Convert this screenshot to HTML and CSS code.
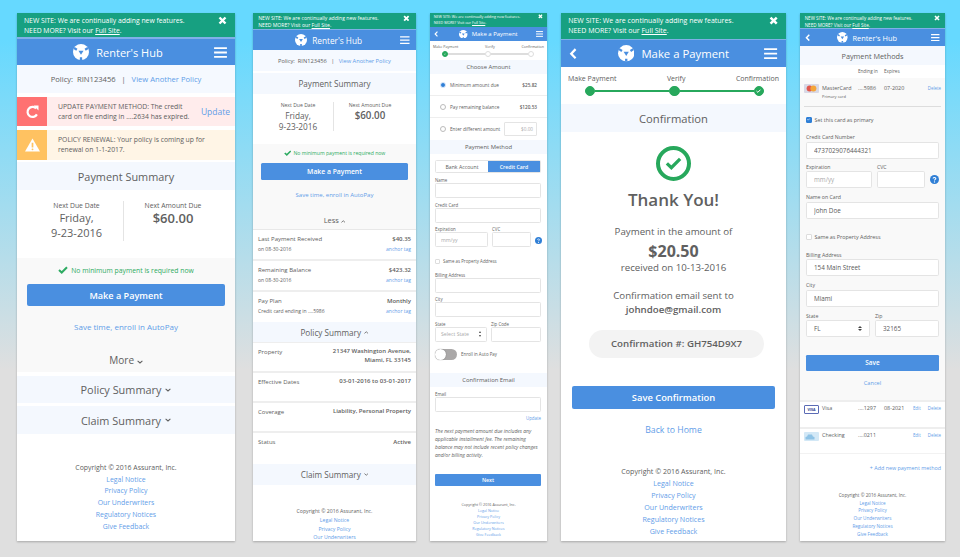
FILE: index.html
```html
<!DOCTYPE html>
<html lang="en">
  <head>
    <meta charset="UTF-8" />
    <title>Renter's Hub</title>
    <link rel="stylesheet" href="styles.css">
  </head>

  <body>
    <svg class="sprites" width="0" height="0">
      <symbol id="i-logo" viewBox="0 0 24 24">
        <circle cx="12" cy="12" r="12" fill="#fff" />
        <path d="M8.2 10h7.6L12 16z" fill="#4a8fe0" />
        <path d="M12 24v-4M1.6 6l4.2 2.6M22.4 6l-4.2 2.6" stroke="#4a8fe0" stroke-width="3.4" fill="none" />
      </symbol>
      <symbol id="i-close" viewBox="0 0 12 12">
        <path d="M2 2l8 8M10 2l-8 8" stroke="#fff" stroke-width="3.2" fill="none" />
      </symbol>
      <symbol id="i-menu" viewBox="0 0 14 12">
        <path d="M0 1.2h14M0 6h14M0 10.8h14" stroke="#fff" stroke-width="2" fill="none" />
      </symbol>
      <symbol id="i-back" viewBox="0 0 8 12">
        <path d="M6.6 1.2L2 6l4.6 4.8" stroke="#fff" stroke-width="2.4" fill="none" />
      </symbol>
      <symbol id="i-down" viewBox="0 0 10 6">
        <path d="M1 1l4 3.6L9 1" stroke="currentColor" stroke-width="1.8" fill="none" />
      </symbol>
      <symbol id="i-up" viewBox="0 0 10 6">
        <path d="M1 5l4-3.6L9 5" stroke="currentColor" stroke-width="1.8" fill="none" />
      </symbol>
      <symbol id="i-check" viewBox="0 0 14 11">
        <path d="M1.4 5.4l3.8 3.6L12.6 1.6" stroke="currentColor" stroke-width="2.8" fill="none" />
      </symbol>
      <symbol id="i-help" viewBox="0 0 12 12">
        <circle cx="6" cy="6" r="6" fill="#2f7fd6" />
        <path d="M4.2 4.6C4.2 3 7.8 3 7.8 4.7 7.8 5.9 6 5.8 6 7.2" stroke="#fff" stroke-width="1.4" fill="none" />
        <circle cx="6" cy="9.2" r=".9" fill="#fff" />
      </symbol>
    </svg>

    <!-- home, collapsed -->
    <div class="screen s1">
      <div class="banner">
        <p>NEW SITE: We are continually adding new features.<br />NEED MORE? Visit our <a>Full Site</a>.</p>
        <svg class="close"><use href="#i-close" /></svg>
      </div>
      <div class="header">
        <span></span>
        <div class="brand"><svg class="logo"><use href="#i-logo" /></svg><span>Renter's Hub</span></div>
        <svg class="menu"><use href="#i-menu" /></svg>
      </div>
      <div class="policy">Policy: &nbsp;RIN123456 &nbsp;&nbsp;|&nbsp;&nbsp; <a>View Another Policy</a></div>
      <div class="alert alert-red">
        <div class="alert-icon">
          <svg viewBox="0 0 14 14"><path d="M11.4 9.4A5 5 0 1 1 10.6 3.4" stroke="#fff" stroke-width="2.2" fill="none" /><path d="M8 0.6h5v5z" fill="#fff" /></svg>
        </div>
        <p>UPDATE PAYMENT METHOD: The credit<br />card on file ending in ....2634 has expired.</p>
        <a class="alert-link">Update</a>
      </div>
      <div class="alert alert-orange">
        <div class="alert-icon">
          <svg viewBox="0 0 16 14"><path d="M8 0l8 14H0z" fill="#fff" /><path d="M8 4.6v5" stroke="#ffc261" stroke-width="1.8" /><circle cx="8" cy="11.6" r="1" fill="#ffc261" /></svg>
        </div>
        <p>POLICY RENEWAL: Your policy is coming up for<br />renewal on 1-1-2017.</p>
      </div>
      <div class="section">Payment Summary</div>
      <div class="summary">
        <div class="summary-col">
          <div class="summary-label">Next Due Date</div>
          <div class="summary-date">Friday,<br />9-23-2016</div>
        </div>
        <div class="summary-col">
          <div class="summary-label">Next Amount Due</div>
          <div class="summary-amount">$60.00</div>
        </div>
      </div>
      <div class="pay-box">
        <div class="no-min"><svg><use href="#i-check" /></svg>No minimum payment is required now</div>
        <div class="btn">Make a Payment</div>
        <div class="enroll"><a>Save time, enroll in AutoPay</a></div>
        <div class="more">More <svg><use href="#i-down" /></svg></div>
      </div>
      <div class="section">Policy Summary <svg><use href="#i-down" /></svg></div>
      <div class="section">Claim Summary <svg><use href="#i-down" /></svg></div>
      <div class="footer">
        <div>Copyright © 2016 Assurant, Inc.</div>
        <a>Legal Notice</a><a>Privacy Policy</a><a>Our Underwriters</a><a>Regulatory Notices</a><a>Give Feedback</a>
      </div>
    </div>

    <!-- home, expanded -->
    <div class="screen s2">
      <div class="banner">
        <p>NEW SITE: We are continually adding new features.<br />NEED MORE? Visit our <a>Full Site</a>.</p>
        <svg class="close"><use href="#i-close" /></svg>
      </div>
      <div class="header">
        <span></span>
        <div class="brand"><svg class="logo"><use href="#i-logo" /></svg><span>Renter's Hub</span></div>
        <svg class="menu"><use href="#i-menu" /></svg>
      </div>
      <div class="policy">Policy: &nbsp;RIN123456 &nbsp;&nbsp;|&nbsp;&nbsp; <a>View Another Policy</a></div>
      <div class="section">Payment Summary</div>
      <div class="summary">
        <div class="summary-col">
          <div class="summary-label">Next Due Date</div>
          <div class="summary-date">Friday,<br />9-23-2016</div>
        </div>
        <div class="summary-col">
          <div class="summary-label">Next Amount Due</div>
          <div class="summary-amount">$60.00</div>
        </div>
      </div>
      <div class="pay-box">
        <div class="no-min"><svg><use href="#i-check" /></svg>No minimum payment is required now</div>
        <div class="btn">Make a Payment</div>
        <div class="enroll"><a>Save time, enroll in AutoPay</a></div>
        <div class="more">Less <svg><use href="#i-up" /></svg></div>
      </div>
      <div class="row">
        <div><div>Last Payment Received</div><small>on 08-30-2016</small></div>
        <div class="row-end"><b>$40.35</b><a>anchor tag</a></div>
      </div>
      <div class="row">
        <div><div>Remaining Balance</div><small>on 08-30-2016</small></div>
        <div class="row-end"><b>$423.32</b><a>anchor tag</a></div>
      </div>
      <div class="row row-plan">
        <div><div>Pay Plan</div><small>Credit card ending in ....5986</small></div>
        <div class="row-end"><b>Monthly</b><a>anchor tag</a></div>
      </div>
      <div class="section">Policy Summary <svg><use href="#i-up" /></svg></div>
      <div class="row row-policy">
        <div>Property</div>
        <div class="row-end"><b>21347 Washington Avenue,<br />Miami, FL 33145</b></div>
      </div>
      <div class="row row-policy">
        <div>Effective Dates</div>
        <div class="row-end"><b>03-01-2016 to 03-01-2017</b></div>
      </div>
      <div class="row row-policy">
        <div>Coverage</div>
        <div class="row-end"><b>Liability, Personal Property</b></div>
      </div>
      <div class="row row-status">
        <div>Status</div>
        <div class="row-end"><b>Active</b></div>
      </div>
      <div class="section">Claim Summary <svg><use href="#i-down" /></svg></div>
      <div class="footer">
        <div>Copyright © 2016 Assurant, Inc.</div>
        <a>Legal Notice</a><a>Privacy Policy</a><a>Our Underwriters</a>
      </div>
    </div>

    <!-- payment form -->
    <div class="screen s3">
      <div class="banner">
        <p>NEW SITE: We are continually adding new features.<br />NEED MORE? Visit our <a>Full Site</a>.</p>
        <svg class="close"><use href="#i-close" /></svg>
      </div>
      <div class="header">
        <svg class="back"><use href="#i-back" /></svg>
        <div class="brand"><svg class="logo"><use href="#i-logo" /></svg><span>Make a Payment</span></div>
        <svg class="menu"><use href="#i-menu" /></svg>
      </div>
      <div class="stepper">
        <div class="step-labels"><span>Make Payment</span><span>Verify</span><span>Confirmation</span></div>
        <div class="step-track">
          <i class="dot dot-done"><svg><use href="#i-check" /></svg></i><i class="bar"></i><i class="dot"></i><i class="bar"></i><i class="dot"></i>
        </div>
      </div>
      <div class="section">Choose Amount</div>
      <div class="choice"><i class="radio radio-on"></i><span>Minimum amount due</span><b>$25.82</b></div>
      <div class="choice"><i class="radio"></i><span>Pay remaining balance</span><b>$120.53</b></div>
      <div class="choice choice-last"><i class="radio"></i><span>Enter different amount</span><div class="amount-input">$0.00</div></div>
      <div class="section">Payment Method</div>
      <div class="form">
        <div class="segmented"><span>Bank Account</span><span class="segment-on">Credit Card</span></div>
        <div class="field"><label>Name</label><input class="input" /></div>
        <div class="field"><label>Credit Card</label><input class="input" /></div>
        <div class="field-row">
          <div class="field field-exp"><label>Expiration</label><input class="input" placeholder="mm/yy" /></div>
          <div class="field field-cvc"><label>CVC</label><input class="input" /></div>
          <svg class="help"><use href="#i-help" /></svg>
        </div>
        <div class="check-line"><i class="checkbox"></i>Same as Property Address</div>
        <div class="field"><label>Billing Address</label><input class="input" /></div>
        <div class="field"><label>City</label><input class="input" /></div>
        <div class="field-row">
          <div class="field field-state"><label>State</label><div class="input select select-empty">Select State<span class="select-arrows"></span></div></div>
          <div class="field field-zip"><label>Zip Code</label><input class="input" /></div>
        </div>
        <div class="toggle-line"><i class="toggle"><i class="knob"></i></i>Enroll in Auto Pay</div>
      </div>
      <div class="section section-email">Confirmation Email</div>
      <div class="form">
        <div class="field"><label>Email</label><input class="input" /></div>
        <div class="update"><a>Update</a></div>
        <p class="note">The next payment amount due includes any<br />applicable installment fee. The remaining<br />balance may not include recent policy changes<br />and/or billing activity.</p>
        <div class="btn">Next</div>
      </div>
      <div class="footer">
        <div>Copyright © 2016 Assurant, Inc.</div>
        <a>Legal Notice</a><a>Privacy Policy</a><a>Our Underwriters</a><a>Regulatory Notices</a><a>Give Feedback</a>
      </div>
    </div>

    <!-- confirmation -->
    <div class="screen s4">
      <div class="banner">
        <p>NEW SITE: We are continually adding new features.<br />NEED MORE? Visit our <a>Full Site</a>.</p>
        <svg class="close"><use href="#i-close" /></svg>
      </div>
      <div class="header">
        <svg class="back"><use href="#i-back" /></svg>
        <div class="brand"><svg class="logo"><use href="#i-logo" /></svg><span>Make a Payment</span></div>
        <svg class="menu"><use href="#i-menu" /></svg>
      </div>
      <div class="stepper">
        <div class="step-labels"><span>Make Payment</span><span>Verify</span><span>Confirmation</span></div>
        <div class="step-track">
          <i class="dot dot-full"></i><i class="bar bar-done"></i><i class="dot dot-full"></i><i class="bar bar-done"></i><i class="dot dot-done"><svg><use href="#i-check" /></svg></i>
        </div>
      </div>
      <div class="section">Confirmation</div>
      <div class="thanks">
        <div class="thanks-icon"><svg><use href="#i-check" /></svg></div>
        <h1>Thank You!</h1>
        <p class="paid">Payment in the amount of</p>
        <p class="paid-amount">$20.50</p>
        <p>received on 10-13-2016</p>
        <p class="sent">Confirmation email sent to</p>
        <p class="sent-to">johndoe@gmail.com</p>
        <div class="pill">Confirmation #: GH754D9X7</div>
        <div class="btn">Save Confirmation</div>
        <p class="home"><a>Back to Home</a></p>
      </div>
      <div class="footer">
        <div>Copyright © 2016 Assurant, Inc.</div>
        <a>Legal Notice</a><a>Privacy Policy</a><a>Our Underwriters</a><a>Regulatory Notices</a><a>Give Feedback</a>
      </div>
    </div>

    <!-- payment methods -->
    <div class="screen s5">
      <div class="banner">
        <p>NEW SITE: We are continually adding new features.<br />NEED MORE? Visit our <a>Full Site</a>.</p>
        <svg class="close"><use href="#i-close" /></svg>
      </div>
      <div class="header">
        <svg class="back"><use href="#i-back" /></svg>
        <div class="brand"><svg class="logo"><use href="#i-logo" /></svg><span>Renter's Hub</span></div>
        <svg class="menu"><use href="#i-menu" /></svg>
      </div>
      <div class="section">Payment Methods</div>
      <div class="method method-head"><span></span><span></span><span>Ending in</span><span>Expires</span></div>
      <div class="edit-box">
        <div class="method">
          <svg class="card" viewBox="0 0 15 9"><rect width="15" height="9" rx="1" fill="#d9d9e6" /><circle cx="5.6" cy="4.5" r="3" fill="#e2574c" /><circle cx="9.4" cy="4.5" r="3" fill="#f4a53a" /></svg>
          <span class="method-name">MasterCard</span><span>....5986</span><span>07-2020</span>
          <span class="method-links"><a>Delete</a></span>
          <small>Primary card</small>
        </div>
        <hr />
        <div class="check-line"><i class="checkbox checkbox-on"><svg><use href="#i-check" /></svg></i>Set this card as primary</div>
        <div class="form">
          <div class="field"><label>Credit Card Number</label><input class="input" value="4737029076444321" /></div>
          <div class="field-row">
            <div class="field field-exp"><label>Expiration</label><input class="input" placeholder="mm/yy" /></div>
            <div class="field field-cvc"><label>CVC</label><input class="input" /></div>
            <svg class="help"><use href="#i-help" /></svg>
          </div>
          <div class="field"><label>Name on Card</label><input class="input" value="John Doe" /></div>
          <div class="check-line check-address"><i class="checkbox"></i>Same as Property Address</div>
          <div class="field"><label>Billing Address</label><input class="input" value="154 Main Street" /></div>
          <div class="field"><label>City</label><input class="input" value="Miami" /></div>
          <div class="field-row">
            <div class="field field-state"><label>State</label><div class="input select">FL<span class="select-arrows"></span></div></div>
            <div class="field field-zip"><label>Zip</label><input class="input" value="32165" /></div>
          </div>
          <div class="btn">Save</div>
          <div class="cancel"><a>Cancel</a></div>
        </div>
      </div>
      <div class="method method-row">
        <div class="visa">VISA</div>
        <span class="method-name">Visa</span><span>....1297</span><span>08-2021</span>
        <span class="method-links"><a>Edit</a><a>Delete</a></span>
      </div>
      <div class="method method-row method-last">
        <svg class="card" viewBox="0 0 15 9"><rect width="15" height="9" rx="1" fill="#d3e8f6" /><path d="M1.5 7.4V5l1.6-.4L4 2.6h4l.9 2 1.6.4v2.4z" fill="#8fc3e6" /></svg>
        <span class="method-name">Checking</span><span>....0211</span><span></span>
        <span class="method-links"><a>Edit</a><a>Delete</a></span>
      </div>
      <div class="add-new"><a>+ Add new payment method</a></div>
      <div class="footer">
        <div>Copyright © 2016 Assurant, Inc.</div>
        <a>Legal Notice</a><a>Privacy Policy</a><a>Our Underwriters</a><a>Regulatory Notices</a><a>Give Feedback</a>
      </div>
    </div>
  </body>
</html>
```

FILE: styles.css
```css
* {
  box-sizing: border-box;
}

html,
body {
  height: 100%;
}

body {
  display: flex;
  align-items: flex-start;
  gap: 14px;
  margin: 0;
  padding: 13px 0 0 17px;
  overflow: hidden;
  background: linear-gradient(#66d9ff 0, #66d9ff 40px, #dfdfdf 370px);
  font-family: "Open Sans", "Liberation Sans", sans-serif;
  color: #606060;
}

a {
  color: #5f9de8;
}

p,
h1 {
  margin: 0;
  font-weight: 400;
}

.sprites {
  position: absolute;
}

/* every screen is the same phone layout at a different zoom; --u is the zoom */
.screen {
  flex: none;
  height: 528px;
  overflow: hidden;
  background: #fff;
  box-shadow: 0 1px 2px rgba(0, 0, 0, 0.25);
}

.s1 { --u: 1; width: 218px; }
.s2 { --u: 0.75; width: 163px; margin-left: 4px; }
.s3 { --u: 0.54; width: 117px; }
.s4 { --u: 1.03; width: 225px; }
.s5 { --u: 0.67; width: 145px; }

.banner {
  display: flex;
  justify-content: space-between;
  align-items: flex-start;
  padding: calc(var(--u) * 3px) calc(var(--u) * 8px) 0 calc(var(--u) * 7px);
  background: #17a081;
  color: #fff;
  font-size: calc(var(--u) * 6.8px);
  line-height: calc(var(--u) * 9.5px);
}

.banner a {
  color: #fff;
  text-decoration: underline;
}

.close {
  flex: none;
  width: calc(var(--u) * 9px);
  height: calc(var(--u) * 9px);
}

.header {
  display: grid;
  grid-template-columns: 1fr auto 1fr;
  align-items: center;
  padding: 0 calc(var(--u) * 8px);
  background: #4a8fe0;
  border-top: 1px solid #7fb0e8;
  color: #fff;
  font-size: calc(var(--u) * 11px);
}

.brand {
  display: flex;
  align-items: center;
  gap: calc(var(--u) * 7px);
}

.logo {
  width: calc(var(--u) * 16px);
  height: calc(var(--u) * 16px);
}

.menu {
  justify-self: end;
  width: calc(var(--u) * 13px);
  height: calc(var(--u) * 11px);
}

.back {
  width: calc(var(--u) * 8px);
  height: calc(var(--u) * 11px);
}

.policy {
  display: flex;
  justify-content: center;
  align-items: center;
  white-space: pre;
  background: #f5f9ff;
  font-size: calc(var(--u) * 7.6px);
}

.section {
  display: flex;
  justify-content: center;
  align-items: center;
  gap: calc(var(--u) * 4px);
  background: #f4f8fe;
  font-size: calc(var(--u) * 10.9px);
}

.section svg,
.more svg {
  width: calc(var(--u) * 6px);
  height: calc(var(--u) * 4px);
}

.alert {
  display: flex;
  align-items: center;
  font-size: calc(var(--u) * 6.8px);
  line-height: calc(var(--u) * 10px);
}

.alert p {
  flex: 1;
  padding-left: 11px;
}

.alert-icon {
  display: flex;
  justify-content: center;
  align-items: center;
  flex: none;
  align-self: stretch;
  width: 30px;
}

.alert-icon svg {
  width: 15px;
  height: 14px;
}

.alert-red { background: #ffecec; }
.alert-red .alert-icon { background: #ff7272; }
.alert-orange { background: #fff5e6; }
.alert-orange .alert-icon { background: #ffc261; }

.alert-link {
  margin-right: 5px;
  font-size: calc(var(--u) * 8.5px);
}

.summary {
  display: grid;
  text-align: center;
}

.summary-col + .summary-col {
  border-left: 1px solid #e4e4e4;
}

.summary-label {
  font-size: calc(var(--u) * 6.8px);
}

.summary-date {
  font-size: calc(var(--u) * 11px);
}

.summary-amount {
  font-size: calc(var(--u) * 13px);
  font-weight: 600;
}

.pay-box {
  background: #f9f9f9;
  text-align: center;
}

.no-min {
  display: flex;
  justify-content: center;
  align-items: center;
  gap: calc(var(--u) * 3px);
  color: #2eab62;
  font-size: calc(var(--u) * 6.8px);
}

.no-min svg {
  width: calc(var(--u) * 10px);
  height: calc(var(--u) * 8px);
}

.btn {
  display: flex;
  justify-content: center;
  align-items: center;
  background: #4a8fe0;
  border-radius: calc(var(--u) * 2px);
  color: #fff;
  font-weight: 600;
  font-size: calc(var(--u) * 9.1px);
}

.enroll {
  font-size: calc(var(--u) * 8px);
}

.more {
  font-size: calc(var(--u) * 10px);
}

.footer {
  display: flex;
  flex-direction: column;
  align-items: center;
  font-size: calc(var(--u) * 6.9px);
}

.row {
  display: flex;
  justify-content: space-between;
  height: 31px;
  padding: 4px 5px 0;
  border-bottom: 2px solid #eee;
  font-size: 6px;
  line-height: 10px;
}

.row small {
  display: block;
  font-size: 5px;
}

.row-end {
  display: flex;
  flex-direction: column;
  align-items: flex-end;
  text-align: right;
}

.row-end b {
  font-weight: 600;
}

.row-end a {
  font-size: 5px;
}

.stepper {
  background: #fff;
}

.step-labels {
  display: flex;
  justify-content: space-between;
  font-size: calc(var(--u) * 6.8px);
}

.step-track {
  display: flex;
  align-items: center;
}

.dot {
  display: flex;
  justify-content: center;
  align-items: center;
  flex: none;
  width: calc(var(--u) * 10px);
  height: calc(var(--u) * 10px);
  border: 1px solid #ddd;
  border-radius: 50%;
  background: #fff;
}

.dot-full,
.dot-done {
  border-color: #27a85c;
  background: #27a85c;
  color: #fff;
}

.dot svg {
  width: 60%;
  height: 50%;
}

.bar {
  flex: 1;
  height: calc(var(--u) * 2px);
  background: #ddd;
}

.bar-done {
  background: #27a85c;
}

.form {
  display: flex;
  flex-direction: column;
}

.field label {
  display: block;
}

.input {
  display: block;
  width: 100%;
  background: #fff;
  border: 1px solid #e4e4e4;
  border-radius: calc(var(--u) * 2.5px);
  padding: 0 calc(var(--u) * 8px);
  color: #5a5a5a;
  font-family: inherit;
  font-size: calc(var(--u) * 9.5px);
}

.input::placeholder {
  color: #aaa;
}

.field-row {
  display: flex;
  align-items: flex-end;
}

.select {
  display: flex;
  justify-content: space-between;
  align-items: center;
}

.select-empty {
  color: #aaa;
}

.select-arrows {
  display: flex;
  flex-direction: column;
  gap: calc(var(--u) * 2px);
}

.select-arrows::before,
.select-arrows::after {
  content: "";
  border-left: calc(var(--u) * 3px) solid transparent;
  border-right: calc(var(--u) * 3px) solid transparent;
}

.select-arrows::before {
  border-bottom: calc(var(--u) * 4px) solid #444;
}

.select-arrows::after {
  border-top: calc(var(--u) * 4px) solid #444;
}

.help {
  flex: none;
}

.check-line {
  display: flex;
  align-items: center;
}

.checkbox {
  display: flex;
  justify-content: center;
  align-items: center;
  flex: none;
  background: #fff;
  border: 1px solid #ddd;
  border-radius: 1px;
}

.checkbox-on {
  background: #2f7fd6;
  border-color: #2f7fd6;
  color: #fff;
}

.checkbox-on svg {
  width: 80%;
  height: 70%;
}

/* home, collapsed */
.s1 .banner { height: 24px; }
.s1 .header { height: 28px; border-top-width: 2px; }
.s1 .brand { margin-right: 16px; }
.s1 .policy { height: 28px; }
.s1 .alert { height: 29px; margin-top: 4px; }
.s1 .alert-orange { height: 30px; }
.s1 .section { height: 28px; margin-top: 3px; }
.s1 .alert + .section { margin-top: 2px; }
.s1 .summary { grid-template-columns: 93fr 99fr; height: 68px; padding: 11px 13px 0; }
.s1 .summary-col { height: 40px; }
.s1 .summary-label { line-height: 10px; }
.s1 .summary-date,
.s1 .summary-amount { line-height: 14.5px; }
.s1 .pay-box { height: 114px; padding-top: 7px; }
.s1 .no-min { height: 10px; }
.s1 .btn { height: 22px; margin: 9px 10px 0; }
.s1 .enroll { margin-top: 15px; line-height: 12px; }
.s1 .more { margin-top: 20px; line-height: 14px; }
.s1 .pay-box + .section { height: 27px; margin-top: 4px; }
.s1 .footer { padding-top: 28px; line-height: 11.7px; }

/* home, expanded */
.s2 .banner { height: 16px; }
.s2 .header { height: 21px; }
.s2 .brand { margin-right: 12px; }
.s2 .policy { height: 21px; }
.s2 .section { height: 21px; margin-top: 2px; }
.s2 .summary { grid-template-columns: 70fr 73fr; height: 50px; padding: 8px 10px 0; }
.s2 .summary-col { height: 29px; }
.s2 .summary-label { line-height: 7.5px; }
.s2 .summary-date,
.s2 .summary-amount { line-height: 11px; }
.s2 .pay-box { height: 86px; padding-top: 5px; border-bottom: 1px solid #e8e8e8; }
.s2 .no-min { height: 8px; }
.s2 .btn { height: 17px; margin: 6px 8px 0; }
.s2 .enroll { margin-top: 10px; line-height: 10px; }
.s2 .more { margin-top: 15px; line-height: 10px; }
.s2 .row-plan { height: 30px; border-bottom: 0; }
.s2 .row-plan + .section { height: 21px; margin-top: 0; border-bottom: 1px solid #eee; }
.s2 .row-policy { height: 30px; }
.s2 .row-policy b { line-height: 9px; }
.s2 .row-status { height: 31px; border-bottom: 0; }
.s2 .row-status + .section { height: 21px; margin-top: 0; }
.s2 .footer { padding-top: 22px; line-height: 8.8px; }

/* payment form */
.s3 .banner { height: 14px; padding-top: 1px; line-height: 5.7px; }
.s3 .header { height: 14px; border-top: 0; }
.s3 .stepper { height: 19px; }
.s3 .step-labels { padding: 3px 3px 0; line-height: 6px; }
.s3 .step-track { padding: 0 13px 0 12px; margin-top: 1px; }
.s3 .dot { width: 6px; height: 6px; }
.s3 .section { height: 14px; }
.s3 .section-email { height: 14.5px; margin-top: 13px; }
.s3 .form { padding: 0 6px 0 5px; }
.s3 .choice {
  display: flex;
  align-items: center;
  height: 22px;
  padding: 0 10px 0 10px;
  border-bottom: 1px solid #eee;
  font-size: 4.7px;
}
.s3 .choice-last { border-bottom: 0; }
.s3 .choice span { flex: 1; }
.s3 .choice b { font-weight: 600; }
.s3 .radio {
  flex: none;
  width: 6px;
  height: 6px;
  margin-right: 4px;
  background: #fff;
  border: 0.5px solid #bbb;
  border-radius: 50%;
}
.s3 .radio-on { border: 1.5px solid #dfeafa; background: #2f7fd6; }
.s3 .amount-input {
  display: flex;
  justify-content: flex-end;
  align-items: center;
  width: 33px;
  height: 14px;
  padding-right: 3px;
  border: 1px solid #e4e4e4;
  border-radius: 1px;
  color: #aaa;
}
.s3 .segmented {
  display: flex;
  height: 13px;
  margin: 6px 0 4px;
  border: 1px solid #e4e4e4;
  border-radius: 1.5px;
  font-size: 5.2px;
}
.s3 .segmented span {
  display: flex;
  justify-content: center;
  align-items: center;
  flex: 1;
}
.s3 .segment-on { background: #4a8fe0; color: #fff; font-weight: 600; }
.s3 .field { margin-bottom: 3.5px; font-size: 4.4px; line-height: 6px; }
.s3 .field-row { gap: 4px; }
.s3 .field-exp { width: 53px; flex: none; }
.s3 .field-cvc { width: 39px; flex: none; }
.s3 .field-state { width: 52px; flex: none; }
.s3 .field-zip { flex: 1; }
.s3 .input { height: 15px; padding: 0 5px; font-size: 5.2px; }
.s3 .help { width: 7px; height: 7px; margin: 0 0 7px 0; }
.s3 .check-line { gap: 3px; height: 6px; margin: 7.5px 0; font-size: 4.4px; }
.s3 .checkbox { width: 5px; height: 5px; }
.s3 .toggle-line { display: flex; align-items: center; gap: 4px; height: 11px; margin-top: 3.5px; font-size: 4.4px; }
.s3 .toggle { display: block; width: 22px; height: 11px; border-radius: 6px; background: #aaa8a8; }
.s3 .knob { display: block; width: 11px; height: 11px; border-radius: 50%; background: #fff; box-shadow: 0 0 1px rgba(0, 0, 0, 0.5); }
.s3 .section-email + .form .field { margin: 3.5px 0 0; }
.s3 .update { margin-top: 3.5px; font-size: 4.4px; line-height: 6px; text-align: right; }
.s3 .note { margin-top: 7px; font-size: 5px; font-style: italic; line-height: 7.9px; white-space: nowrap; }
.s3 .btn { height: 12.5px; margin-top: 14px; font-size: 5.3px; }
.s3 .footer { padding-top: 15.5px; line-height: 6px; font-size: 3.7px; }

/* confirmation */
.s4 .banner { height: 26px; padding-right: 8px; }
.s4 .header { height: 28px; }
.s4 .brand { gap: 7px; }
.s4 .stepper { height: 37px; }
.s4 .step-labels { padding: 7px 7px 0; line-height: 10px; }
.s4 .step-track { padding: 0 22px 0 24px; margin-top: 2px; }
.s4 .section { height: 28px; }
.s4 .thanks { text-align: center; font-size: 9.7px; line-height: 14px; }
.s4 .thanks-icon {
  display: flex;
  justify-content: center;
  align-items: center;
  width: 35px;
  height: 35px;
  margin: 14px auto 0;
  border: 4px solid #27a85c;
  border-radius: 50%;
  color: #27a85c;
}
.s4 .thanks-icon svg { width: 17px; height: 13px; }
.s4 h1 { margin-top: 7px; font-size: 17px; font-weight: 600; line-height: 24px; }
.s4 .paid { margin-top: 13px; }
.s4 .paid-amount { margin-top: 2px; font-size: 16px; font-weight: 700; line-height: 20px; }
.s4 .sent { margin-top: 14px; }
.s4 .sent-to { font-weight: 600; }
.s4 .pill {
  display: flex;
  justify-content: center;
  align-items: center;
  width: 175px;
  height: 28px;
  margin: 13px auto 0 28px;
  border-radius: 14px;
  background: #f3f3f3;
  font-size: 9.7px;
  font-weight: 600;
}
.s4 .btn { height: 23px; margin: 28px 11px 0; }
.s4 .home { margin-top: 14px; font-size: 8.7px; }
.s4 .footer { padding-top: 28px; line-height: 12px; }

/* payment methods */
.s5 .banner { height: 15px; padding-top: 2px; line-height: 6.5px; }
.s5 .header { height: 18px; }
.s5 .brand { margin-right: 11px; }
.s5 .section { height: 19px; }
.s5 .method {
  display: grid;
  grid-template-columns: 18px 36px 26px 1fr auto;
  align-items: center;
  padding: 0 4px;
  font-size: 5.4px;
  line-height: 7px;
}
.s5 .method-head { height: 13px; font-size: 4.6px; }
.s5 .edit-box { height: 322px; background: #f9f9f9; }
.s5 .edit-box .method { padding-top: 5.5px; }
.s5 .method small { grid-column: 2 / 5; font-size: 4px; line-height: 7px; }
.s5 .card { width: 15px; height: 9px; }
.s5 .method-links { display: flex; gap: 7px; font-size: 4.4px; }
.s5 hr { height: 1px; margin: 6px 4px 0; background: #ddd; border: 0; }
.s5 .check-line { gap: 2.5px; height: 8px; margin: 9px 0 0 6px; font-size: 5.4px; }
.s5 .checkbox { width: 6px; height: 6px; }
.s5 .form { padding: 0 6px; }
.s5 .field { margin-top: 5px; font-size: 5.2px; line-height: 8px; }
.s5 .form > .field:first-child { margin-top: 9.5px; }
.s5 .field label { margin-bottom: 0.5px; }
.s5 .input { height: 17px; padding: 0 7px; font-size: 6.3px; }
.s5 .field-row { gap: 5px; }
.s5 .field-exp,
.s5 .field-cvc { margin-top: 4px; flex: none; }
.s5 .field-exp { width: 66px; }
.s5 .field-cvc { width: 48px; }
.s5 .field-state { width: 64px; flex: none; }
.s5 .field-zip { flex: 1; }
.s5 .help { width: 9px; height: 9px; margin: 0 0 4px 0; }
.s5 .check-address { margin: 14px 0 0; }
.s5 .check-address + .field { margin-top: 10px; }
.s5 .btn { height: 16px; margin-top: 17.5px; font-size: 6.4px; }
.s5 .cancel { margin-top: 8px; font-size: 5.6px; line-height: 8px; text-align: center; }
.s5 .method-row { align-items: start; height: 27px; padding-top: 3px; border-top: 2px solid #eee; }
.s5 .method-last { border-bottom: 1px solid #f2f2f2; }
.s5 .visa {
  width: 15px;
  height: 9px;
  border: 1px solid #5b6bb5;
  border-radius: 1px;
  color: #2c3e8f;
  font-size: 3.6px;
  font-weight: 700;
  line-height: 7px;
  text-align: center;
}
.s5 .add-new { margin-top: 10px; padding-right: 4px; font-size: 5.4px; line-height: 8px; text-align: right; }
.s5 .footer { padding-top: 20px; line-height: 7.7px; font-size: 4.6px; }
```
